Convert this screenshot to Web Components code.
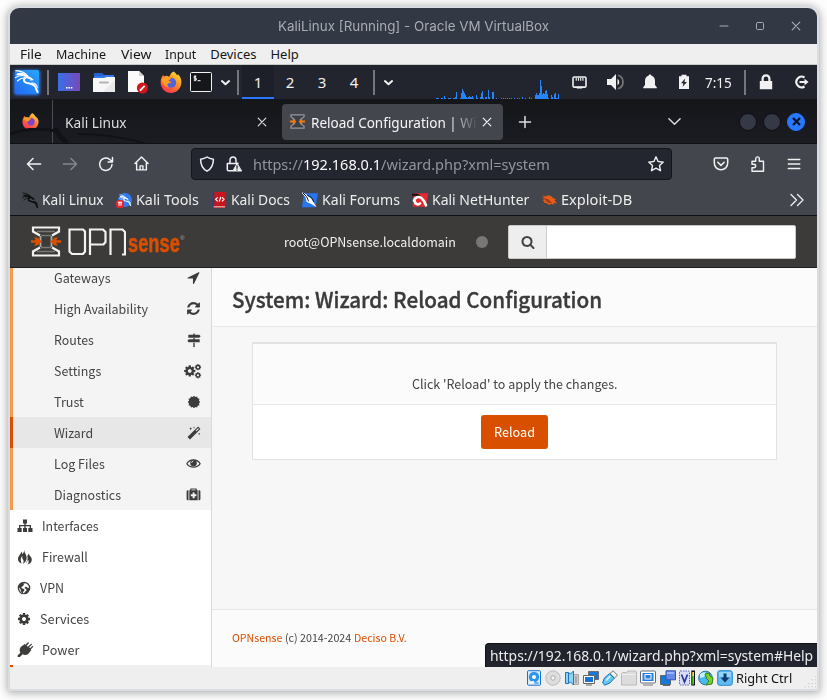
<!DOCTYPE html>
<html lang="en">
<head>
<meta charset="utf-8">
<title>KaliLinux [Running] - Oracle VM VirtualBox</title>
<style>
html,body{margin:0;width:827px;height:700px;overflow:hidden;background:#fdfdfd}
body{font-family:"Noto Sans","Open Sans",sans-serif}
</style>
</head>
<body>
<vm-window></vm-window>
<script>
const S = (vb, body, extra = '') => `<svg viewBox="${vb}" width="100%" height="100%" ${extra}>${body}</svg>`;
const L = (body, w = 1.5) => S('0 0 16 16', body, `fill="none" stroke="currentColor" stroke-width="${w}" stroke-linecap="round" stroke-linejoin="round"`);
const F = body => S('0 0 16 16', body, 'fill="currentColor"');
const FA = d => S('0 0 1792 1792', `<path d="${d}"/>`, 'fill="currentColor"');
const dragon = (c, w) => `<g fill="none" stroke="${c}" stroke-linecap="round" stroke-linejoin="round"><path stroke-width="${w}" d="M3 5.400C7 4 10.500 5.500 13.500 8.500L16.500 9.600M12.500 8C9 8.800 8.600 12.400 11.600 13.600C15.500 15 19.500 14.200 21 18C21.700 20 22.300 21.500 23.200 23"/><path stroke-width="${w * .55}" d="M1.500 1.600C6 1.800 10.500 3.500 13.500 7M1 8.600C4 6.600 8 6 11.500 7M3 12C5.500 9.600 8.500 8.600 11 8.800M13.500 7.600L18.500 10.800L16 11M17.500 14C20.500 13.800 22.600 15.600 22.800 18.600"/></g>`;
const cog = 'M1152 896q0-106-75-181t-181-75-181 75-75 181 75 181 181 75 181-75 75-181zm512-109v222q0 12-8 23t-20 13l-185 28q-19 54-39 91 35 50 107 138 10 12 10 25t-9 23q-27 37-99 108t-94 71q-12 0-26-9l-138-108q-44 23-91 38-16 136-29 186-7 28-36 28h-222q-14 0-24.5-8.5t-11.5-21.5l-28-184q-49-16-90-37l-141 107q-10 9-25 9-14 0-25-11-126-114-165-168-7-10-7-23 0-12 8-23 15-21 51-66.5t54-70.5q-27-50-41-99l-183-27q-13-2-21-12.5t-8-23.5v-222q0-12 8-23t19-13l186-28q14-46 39-92-40-57-107-138-10-12-10-24 0-10 9-23 26-36 98.5-107.5t94.5-71.5q13 0 26 10l138 107q44-23 91-38 16-136 29-186 7-28 36-28h222q14 0 24.5 8.5t11.5 21.5l28 184q49 16 90 37l142-107q9-9 24-9 13 0 25 10 129 119 165 170 7 8 7 22 0 12-8 23-15 21-51 66.5t-54 70.5q26 50 41 98l183 28q13 2 21 12.5t8 23.5z';
const star = (n, r1, r2) => Array.from({length: n * 2}, (_, i) => { const a = i * Math.PI / n - Math.PI / 2, r = i % 2 ? r2 : r1; return (8 + r * Math.cos(a)).toFixed(2) + ',' + (8 + r * Math.sin(a)).toFixed(2); }).join(' ');

const ICONS = {
  min: L('<path d="M4 8h8"/>', 1), max: L('<rect x="4.5" y="4.5" width="7" height="7" rx="1"/>', 1), close: L('<path d="M4.200 4.200l7.600 7.600M11.800 4.200l-7.600 7.600"/>', 1.2),
  plus: L('<path d="M8 2.500v11M2.500 8h11"/>', 1.5),
  chev: L('<path d="M2 5L8 11l6-6"/>', 1.5), chevS: L('<path d="M5 6.800L8 9.500l3-2.700"/>', 1.7),
  kali: S('0 0 32 32', `<defs><linearGradient id="g" x1="0" y1="1" x2="1" y2="0"><stop stop-color="#2468f2"/><stop offset="1" stop-color="#27a6fb"/></linearGradient><filter id="b" x="-30%" y="-30%" width="160%" height="160%"><feGaussianBlur stdDeviation="1.600"/></filter></defs><rect x="3" y="4" width="26" height="25" rx="3" fill="#2d7bff" filter="url(#b)"/><rect x="4" y="4" width="24" height="24" rx="1.500" fill="url(#g)"/><g transform="translate(3.400 3)">${dragon('#fff', 2)}</g>`),
  desk: S('0 0 22 18', '<defs><linearGradient id="g"><stop stop-color="#3a70e8"/><stop offset="1" stop-color="#7849b8"/></linearGradient></defs><path fill="url(#g)" d="M0 0h22v18H0z"/><path fill="#fff" d="M8 14h1.600v1.500H8zM10.400 14H12v1.500h-1.600zM12.800 14h1.600v1.500h-1.600z"/>'),
  folder: S('0 0 22 21', '<path d="M1 1h8l2 2h10v8H1z" fill="#3478ea"/><path d="M1 1h8l2 3H1z" fill="#2562cf"/><path d="M0 6h11l3-1h8v15H0z" fill="#f7f7f7"/><path d="M22 8v12H10z" fill="#e8e8e8"/><rect x="6" y="9.400" width="10" height="2.200" rx="1" fill="#b4b4b4"/>'),
  doc: S('0 0 22 23', '<path d="M1 0h11l5 5v16H1z" fill="#fafafa"/><path d="M12 0l5 5h-5z" fill="#d0d0d0"/><circle cx="15.500" cy="17" r="5.600" fill="#d3151c"/><path d="M13 19.600l4.600-4.800" stroke="#fff" stroke-width="1.800"/>'),
  fox: S('0 0 22 22', '<defs><linearGradient id="g" x1=".8" y1="0" x2=".2" y2="1"><stop stop-color="#ffdf3c"/><stop offset=".4" stop-color="#ff9420"/><stop offset="1" stop-color="#fb2a57"/></linearGradient></defs><path fill="url(#g)" d="M13.600.4c2 1.200 2.600 2.600 3.800 4.200.4-.5.5-1 .4-1.500 2.300 2 3.600 5 3.600 8.200C21.400 17.300 16.700 22 11 22S.6 17.300.6 11.500C.6 8.200 1.800 5.500 3.300 3.800c0 .8.2 1.300.6 1.800 2-1 3.600-1 5 .2 1.200-.6 1-3.600 4.700-5.400z"/><circle cx="11.200" cy="11.800" r="5" fill="#5064dc"/><path fill="#ff9a22" d="M1.500 9c1.500-3.500 5-4 7-2.600 1 .1 2.200.2 2.600.7-.6 1.500-2 1.600-2.400 2.800 1 .7 2 .5 3 1.200-1.300 1.500-2.700.6-4 1.800-1.200 1.400.4 2.800 1 3.300-3.200.3-6.200-3.200-7.200-7.200z"/>'),
  fox2: S('0 0 22 22', '<defs><linearGradient id="g" x1=".8" y1="0" x2=".2" y2="1"><stop stop-color="#ffe23c"/><stop offset=".45" stop-color="#ff7a2d"/><stop offset="1" stop-color="#f42a61"/></linearGradient></defs><path fill="url(#g)" d="M13.600.4c2 1.200 2.600 2.600 3.800 4.200 2.600 1.500 4 3.800 4 6.700C21.400 17.300 16.700 22 11 22S.6 17.300.6 11.500C.6 8.200 1.800 5.500 3.300 3.800l2 2 3.600 0c1.200-.6 1-3.600 4.700-5.400z"/><circle cx="11.600" cy="11.400" r="4.800" fill="#8142c8"/><path fill="#ff9a22" d="M2 8c2-2.500 5-3 7-1.600 1 .1 2.200.2 2.600.7-.6 1.500-2 1.600-2.400 2.800l-2 1z"/>'),
  term: S('0 0 22 20', '<rect x=".5" y=".5" width="21" height="19" rx="1" fill="#16171a" stroke="#f2f2f2"/><path d="M6.300 4.300H4.200v1.900h2v1.900H3.800M5.100 3.300v6" fill="none" stroke="#fff"/><path d="M7.500 8.700h3" stroke="#fff"/>'),
  net: S('0 0 16 14', '<rect x="1" y="1" width="14" height="11" rx="1.500" fill="none" stroke="currentColor" stroke-width="1.700"/><path d="M4.500 2v3M6.900 2v3M9.300 2v3M11.700 2v3" stroke="currentColor" stroke-width="1.200"/><path d="M5 12.500h6" stroke="currentColor" stroke-width="2"/>'),
  vol: S('0 0 18 16', '<path d="M0 5h4l5-5v16l-5-5H0z" fill="currentColor"/><path d="M10.500 4.700a4 4 0 0 1 0 6.600z" fill="currentColor"/><path d="M11 1.300a7 7 0 0 1 0 13.400" fill="none" stroke="#777" stroke-width="1.700"/>'),
  bell: F('<path d="M8 .5c1 0 1.400.6 1.500 1.300C12 2.500 13 4.500 13 7v4l1.800 2.300v.9H1.200v-.9L3 11V7c0-2.500 1-4.500 3.500-5.200C6.600 1.100 7 .5 8 .5z"/>'),
  batt: F('<path fill-rule="evenodd" d="M5.500.8h5v1.400H13V15H3V2.200h2.500zM9.200 4.500L5 9.200h2.400l-.8 3.600L11 8H8.500z"/>'),
  lock: F('<path fill-rule="evenodd" d="M3.500 7V4.800C3.500 2 5.300.3 8 .3s4.500 1.700 4.500 4.500V7h1.700v8.300H1.800V7zM5.700 7h4.600V5c0-1.600-.8-2.500-2.300-2.500S5.700 3.400 5.700 5z"/>'),
  out: S('0 0 16 16', '<path d="M11.500 3.500A5.300 5.300 0 1 0 11.500 12.500" fill="none" stroke="currentColor" stroke-width="2.100"/><path d="M6.500 7h5V4.700L15.600 8l-4.100 3.300V9h-5z" fill="currentColor"/>'),
  back: L('<path d="M14.600 8H1.600M7 2.500L1.500 8L7 13.500"/>', 1.5), fwd: L('<path d="M1.400 8h13M9 2.500L14.500 8L9 13.500"/>', 1.5),
  reload: L('<path d="M14 8.500A6.200 6.200 0 1 1 11.500 3.300L14.300 5.800M14.500 1.600V6h-4.400"/>', 1.5),
  home: L('<path d="M1 8L8 1l7 7M2.800 7v7.800h10.400V7M6.500 14.500V10.500h3v4"/>', 1.5),
  shield: L('<path d="M8 1c2 1.500 4.300 2 6.400 2.200 0 5.800-2 9.600-6.400 12C3.600 12.800 1.600 9 1.600 3.200 3.700 3 6 2.500 8 1z"/>', 1.5),
  lockw: L('<path d="M4 7V4.300C4 2 5.300.9 7 .9s3 1.100 3 3.400V6M6.500 14.800H2.500c-.8 0-1.200-.5-1.200-1.300V7.500h9M10.500 7.300h1.500"/><path d="M11 7.700L6.800 15h8.500z" fill="#f2f2f2" stroke="#f2f2f2" stroke-width="1"/><path d="M11 10v2.300M11 14v.1" stroke="#23252f" stroke-width="1.300"/>', 1.5),
  star: L('<path d="M8 .8l2.100 4.700 5.200.6-3.800 3.500 1 5.100L8 12.200l-4.500 2.500 1-5.100L.7 6.100l5.200-.6z"/>', 1.4),
  pocket: L('<path d="M2.500 2h11c.8 0 1.200.4 1.200 1.200V7c0 4-3 6.800-6.700 6.800S1.300 11 1.300 7V3.200C1.300 2.400 1.700 2 2.500 2zM4.800 6.300L8 9.400l3.200-3.100"/>', 1.5),
  puzzle: L('<path d="M2 5.300h3.700V3c0-2.800 3.600-2.800 3.600 0v2.300h4.200v9.900H2v-3.500h1.700c2.600 0 2.600-3.400 0-3.400H2z"/>', 1.4),
  burger: L('<path d="M2.300 3.500h11.500M2.300 8h11.500M2.300 12.500h11.500"/>', 1.4),
  more: L('<path d="M2 2.500L7.500 8L2 13.500M8.500 2.500L14 8l-5.500 5.500"/>', 1.4),
  bk1: S('0 0 24 24', dragon('#0c0c0e', 2.3)),
  bk2: S('0 0 24 24', `<circle cx="13.500" cy="12" r="10.500" fill="#2f7df0"/><g transform="translate(4.500 3) scale(.75)">${dragon('#fff', 2.2)}</g><rect y="12" width="12" height="12" rx="5" fill="#e5262e"/><path d="M2.800 15.500h6.400M4.600 15.500v5M7.500 15.500v5" stroke="#fff" stroke-width="1.600"/>`),
  bk3: S('0 0 24 24', '<path fill="#c9151b" d="M4 0h18v24H4z"/><path fill="#32407a" d="M2 0h3v22H2z"/><path fill="#ddd" d="M4 21.500h17v1.500H4z"/><path d="M10 8l-3 3 3 3M14.500 7.500L12.500 14.500M16.500 8l3 3-3 3" fill="none" stroke="#fff" stroke-width="1.800"/>'),
  bk4: S('0 0 24 24', '<path fill="#2776ef" d="M3 2h21l-4 21H0z"/><path fill="#fff" d="M0 0l7 4 7 6 3 5 5 8-8-5-7-3-2-8-5-5z"/><path stroke="#171a22" stroke-width="1.500" fill="none" d="M1 1l6 6 3 7M8 5l6 3 4 7"/>'),
  bk5: S('0 0 24 24', '<path fill="#e9272f" d="M3 2h21l-3 20H1z"/><path fill="none" stroke="#111" stroke-width="3" d="M0 4h8l4 3"/><path fill="none" stroke="#fff" stroke-width="4" stroke-linecap="round" d="M3 13c1-5 7-7 11-4 4 3 5 6 7 11M4 13c0 5 5 7 8 4"/>'),
  bk6: S('0 0 24 24', '<path fill="#e85a18" d="M2 4l5 3 3-2 5 1 3 3 5 2-3 1 4 5-5-1 1 3-4-1-4 1-5-3-3 0 1-2-3-2 3-1-3-3 3 0z"/><path fill="#a53a12" d="M3 9l8 2 6 6-6-1z"/>'),
  opn: S('0 0 30 31', '<g fill="none"><path d="M9.500 10v11M20.500 10v11" stroke="#a9a9a7" stroke-width="1.800"/><path d="M6 5.500h18M6 25.500h18M10 9.500h10M10 21.500h10" stroke="#777775" stroke-width="1.600"/><path d="M9 9.500L2 5.500V1.500h26V5.500L21 9.500M9 21.500L2 25.500v4h26v-4L21 21.500" stroke="#f1f1f0" stroke-width="2.200"/></g><path fill="#d94f00" d="M0 14.300h5l-2-2.800h3.200L11 15.500 6.200 19.500H3l2-2.800H0zM30 14.300h-5l2-2.800h-3.200L19 15.500l4.800 4H27l-2-2.800h5z"/>'),
  fav: S('0 0 18 18', '<path d="M2 2h14v2l-4 3v4l4 3v2H2v-2l4-3V7L2 4z" fill="#3c3f45" stroke="#96989c" stroke-width="1.200"/><path fill="#f07814" d="M1 8h3V6l4 3-4 3v-2H1zM17 8h-3V6l-4 3 4 3v-2h3z"/>'),
  arrow: FA('M1593 349l-640 1280q-17 35-57 35-5 0-15-2-22-5-35.500-22.500t-13.500-39.500v-576h-576q-22 0-39.500-13.500t-22.500-35.500 4-42 29-30l1280-640q13-7 29-7 27 0 45 19 15 14 18.500 34.500t-6.500 39.500z'),
  refresh: FA('M1639 1056q0 5-1 7-64 268-268 434.500t-478 166.500q-146 0-282.500-55t-243.500-157l-129 129q-19 19-45 19t-45-19-19-45v-448q0-26 19-45t45-19h448q26 0 45 19t19 45-19 45l-137 137q71 66 161 102t187 36q134 0 250-65t186-179q11-17 53-117 8-23 30-23h192q13 0 22.500 9.500t9.500 22.500zm25-800v448q0 26-19 45t-45 19h-448q-26 0-45-19t-19-45 19-45l138-138q-148-137-349-137-134 0-250 65t-186 179q-11 17-53 117-8 23-30 23h-199q-13 0-22.500-9.500t-9.500-22.500v-7q65-268 270-434.500t480-166.500q146 0 284 55.500t245 156.500l130-129q19-19 45-19t45 19 19 45z'),
  cog: FA(cog),
  cogs: S('0 0 1792 1792', `<path transform="translate(-200 160) scale(.82)" d="${cog}"/><path fill-rule="evenodd" transform="translate(1040 60) scale(.46)" d="${cog}"/><path transform="translate(1040 960) scale(.46)" d="${cog}"/>`, 'fill="currentColor"'),
  search: FA('M1216 832q0-185-131.500-316.500t-316.500-131.500-316.500 131.500-131.500 316.500 131.500 316.500 316.500 131.500 316.500-131.500 131.500-316.500zm512 832q0 52-38 90t-90 38q-54 0-90-38l-343-342q-179 124-399 124-143 0-273.500-55.500t-225-150-150-225-55.500-273.500 55.500-273.500 150-225 225-150 273.500-55.500 273.500 55.500 225 150 150 225 55.500 273.500q0 220-124 399l343 343q37 37 37 90z'),
  signs: F('<path d="M7.200.500h1.600V2H14l1.600 1.700L14 5.400H1.500V2h5.700zM7.200 5.800h1.600v1.400h5.700v3.500H2L.4 9 2 7.200h5.200zM7.200 11h1.600v5H7.200z"/>'),
  cert: F(`<polygon points="${star(12, 7.200, 5.900)}"/>`),
  magic: F('<path fill-rule="evenodd" d="M12.700.600l2.700 2.700L3.400 15.500.6 12.700zM12.700 2.400L9.900 5.200l.9.900 2.800-2.800z"/><path d="M2.500 3l1.300-.5L4.300 1l.5 1.500L6 3l-1.200.5L4.300 5l-.5-1.500zM7 1.800l.7-.3L8 .6l.3.9.9.3-.9.300-.3.900-.3-.900zM12.500 9l1-.4.4-1 .4 1 1 .4-1 .4-.4 1-.4-1z"/>'),
  eye: S('0 0 18 16', '<path d="M1 8.200C4.500 2 13.500 2 17 8.200 13.500 13.800 4.500 13.800 1 8.200z" fill="none" stroke="currentColor" stroke-width="1.400"/><circle cx="9" cy="7.400" r="4" fill="currentColor"/><path d="M6.800 7.200a2.200 2.200 0 0 1 2-2.200" stroke="#f4f4f4" fill="none"/>'),
  medkit: S('0 0 18 16', '<path fill="currentColor" fill-rule="evenodd" d="M5 3V1.500Q5 .7 5.800.7h6.400q.8 0 .8.8V3h1v12H4V3zM6.500 3h5v-.9h-5zM8 5.500v2.200H5.800v2.500H8v2.200h2.300v-2.200h2.200V7.700h-2.200V5.500zM3 3v12h-.8Q.700 15 .7 13.500v-9Q.7 3 2.200 3zM15 3v12h.8q1.500 0 1.500-1.500v-9q0-1.500-1.500-1.500z"/>'),
  sitemap: F('<path d="M6 1.500h4v4H8.700V7H14v3h1.500v4h-4.200v-4h1.400V8.300h-4V10H10v4H6v-4h1.300V8.300h-4V10h1.400v4H.5v-4H2V7h5.300V5.500H6z"/>'),
  fire: F('<path d="M7.200.8C7 3.600 9.600 5.600 9.700 8.600c.1 2.800-1.500 5-4 6.700 1-1.800 1.300-3.300.3-4.700-.8-1.200-1-2.200-.6-3.600-1.900 1.500-2.200 3.600-.8 7.600C2 13.600.8 11.800 1 9.500 1.300 6.500 4 5.500 4.300 2.600c.7.700 1 1.600 1 2.600C6.500 4 7.200 2.600 7.200.8zM11.500 3.500c-.2 2.700 3.300 4 3.300 7 0 2.500-1.500 4.200-4.300 5 1.500-1.600 1.600-3.200.3-5-.3 1.800-1 2.800-2 3.600 1.500-2.600 2.400-4.600 1.500-7.300 1.100-.8 1.400-1.900 1.200-3.300z"/>'),
  globe: F('<path fill-rule="evenodd" d="M8 .8a7.200 7.200 0 1 1 0 14.400A7.200 7.200 0 0 1 8 .8zM9.500 2.500L7 3l1.200 1.400L6.300 6 4.800 7.300 6 8.500l1.800.5.8 1.200L7 12.500l-.2 1.500L4.500 12 4 9.500 2.300 7.300 2.500 9c.4 2.600 2.500 4.700 5.500 4.900l1-1.200 2-2.200-.6-1.500-1.800-.8.7-1.500 1.900.2 1.300 1.500L13.800 7c-.4-2-2-4-4.300-4.500z"/>'),
  plug: F('<path d="M14.600 1.400q.7.900 0 1.500l-2.500 2.400 1 1 2.200-2.200q.8-.2 1 .6L13.700 7.400l.7.7-1.200 1.200c-1.400 3.400-4.700 4.600-7.600 3L3 15H.7v-1.700L3.400 10.700C1.800 8 3 4.600 6.300 3.200L7.500 2l.9.8L11 .3q1 0 .9.900L9.700 3.700l1 1z"/>'),
  s1: F('<rect x="1.500" y=".7" width="13" height="14.500" rx="1" fill="#d9ecfb" stroke="#1774cf"/><circle cx="8" cy="7" r="5.200" fill="#2d95eb"/><circle cx="8" cy="7" r="2" fill="#fff"/><path d="M4 13l4-1.500" stroke="#fff" stroke-width="1.500"/><path d="M8.500 13h4" stroke="#1774cf"/>'),
  s2: F('<circle cx="8" cy="8" r="7.200" fill="#ddd" stroke="#bbb"/><circle cx="8" cy="8" r="2.200" fill="#f5f5f5" stroke="#aaa"/>'),
  s3: F('<path d="M9 4.500h5.500v10H9z" fill="#ccc" stroke="#aaa"/><path d="M1.500 2.500h3L6.500 4l3-3v14l-3-3-2 1.500h-3z" fill="#8fd4f4" stroke="#1b76bd"/><path d="M4.500 3v10" stroke="#1b76bd"/><path d="M12 6v7" stroke="#888"/>'),
  s4: F('<path d="M5.500 1.500h10v8h-10z" fill="#1b76d6" stroke="#6d6d6d"/><path d="M.5 5.500h11v8H.500z" fill="#fff" stroke="#666"/><path d="M2 7h8v5H2z" fill="#1873d3"/><path d="M3 15h6" stroke="#666"/>'),
  s5: F('<path d="M11 .8l4.500 4.400L12.500 8 8 3.600z" fill="#f2f2f2" stroke="#777"/><path d="M7.500 3.600l4.800 4.600-4.500 4.800-5 2.200-2.200-2.200 1.800-5z" fill="#65c4f1" stroke="#1670b8"/><path d="M4 10.500l4.300-4.500" stroke="#d2f4ff" stroke-width="1.800"/>'),
  s6: F('<path d="M.5 15V3.500l1-1h4l1.500-1.500h7.500l1 1V15z" fill="#dcdcdc" stroke="#bbb"/><path d="M1 4.500h14" stroke="#eee"/>'),
  s7: F('<rect x=".5" y="1" width="15" height="12" rx="1" fill="#fff" stroke="#646e7a"/><rect x="2.500" y="3" width="11" height="8" fill="#277edc"/><rect x="5" y="4.500" width="6" height="4.500" fill="none" stroke="#fff"/><path d="M3 15h10" stroke="#777"/>'),
  s8: F('<path d="M.5 5.500h10v9H.5z" fill="#1479dc" stroke="#566"/><path d="M6 .8h9.500v9H6z" fill="#6588ef" stroke="#3557a9"/><path d="M7 2h7v2H7z" fill="#9bb6ff"/><path d="M3 15.500h7" stroke="#666"/>'),
  s9: F('<rect x=".5" y="1" width="10" height="14" rx="1" fill="#d9dcfb" stroke="#5660b8" stroke-dasharray="1.500 1"/><path d="M2.500 4.500L5.500 12 8.500 4.500" fill="none" stroke="#2435a0" stroke-width="1.700"/><path d="M12.300.5H16v15h-3.700z" fill="#111"/><path d="M13.300 5h1.700v9.500h-1.700z" fill="#39dd24"/><path d="M13.300 2h1.700v4h-1.700z" fill="#ffe62b"/>'),
  s10: F('<circle cx="7.500" cy="8" r="6.800" fill="#4bb9ef" stroke="#27729d"/><path d="M2 4q4-3 6-1L6 7 2 8zM5 14l2-4" fill="#c5f0fb"/><path d="M7 4l4-1 1 3 3 2-1 6-6 1 3-4-2-2z" fill="#7bd02c" stroke="#398016"/>'),
  s11: F('<rect x=".7" y=".7" width="14.600" height="14.600" rx="2" fill="#62baf1" stroke="#2387c9"/><path d="M2 2h12v5H2z" fill="#94d5fa"/><path d="M6.500 3.500h3v4h3L8 12.500l-4.500-5h3z" fill="#123a70"/>'),
  grip: F('<path d="M14 1h1v1h-1zM10 5h1v1h-1zM14 5h1v1h-1zM6 9h1v1H6zM10 9h1v1h-1zM14 9h1v1h-1zM2 13h1v1H2zM6 13h1v1H6zM10 13h1v1h-1zM14 13h1v1h-1z" fill="#aaa"/>')
};

const define = (name, css, html) => customElements.define(name, class extends HTMLElement {
  constructor() {
    super();
    this.attachShadow({mode: 'open'}).innerHTML = `<style>*{box-sizing:border-box}:host{display:block}${css}</style>${html}`;
  }
});

/* Label drawn at a fixed advance width. */
const labels = [];
customElements.define('fit-text', class extends HTMLElement {
  constructor() {
    super();
    this.attachShadow({mode: 'open'}).innerHTML = '<style>:host{display:inline-block;flex:none;white-space:nowrap;text-align:left}span{display:inline-block;transform-origin:0 50%}</style><span><slot></slot></span>';
    labels.push(this);
  }
  fit() {
    const w = +this.getAttribute('w'), span = this.shadowRoot.querySelector('span');
    this.style.width = w + 'px';
    span.style.transform = `scaleX(${w / span.offsetWidth})`;
  }
});

customElements.define('ui-icon', class extends HTMLElement {
  constructor() {
    super();
    const w = this.getAttribute('w') || 16, h = this.getAttribute('h') || w;
    this.attachShadow({mode: 'open'}).innerHTML = `<style>:host{display:block;flex:none;width:${w}px;height:${h}px}svg{display:block;overflow:visible}</style>${ICONS[this.getAttribute('name')]}`;
  }
});

define('title-bar', `:host{display:grid;grid-template-columns:268px 1fr 36px 36px 36px;align-items:center;justify-items:center;height:36px;background:#323844;color:#a8abb2;border-radius:9px 9px 0 0;padding-right:3px;font:13px/36px Inter,sans-serif}fit-text{justify-self:start}`,
  `<i></i><fit-text w="271">KaliLinux [Running] - Oracle VM VirtualBox</fit-text><ui-icon name="min"></ui-icon><ui-icon name="max"></ui-icon><ui-icon name="close"></ui-icon>`);

define('menu-bar', `:host{display:flex;gap:14.300px;height:21px;background:#efefef;border-bottom:1px solid #c9c9c9;color:#161616;padding-left:10px;font:13px/20px "Noto Sans",sans-serif}`,
  `<fit-text w="22">File</fit-text><fit-text w="50">Machine</fit-text><fit-text w="30">View</fit-text><fit-text w="31">Input</fit-text><fit-text w="46">Devices</fit-text><fit-text w="28">Help</fit-text>`);

const bars = [[0,1],[1,1],[2,1],[5,1],[6,1],[8,3],[9,1],[12,1],[13,1],[14,1],[17,1],[18,1],[19,2],[20,7],[24,1],[25,6],[26,10],[27,8],[28,6],[29,4],[30,2],[31,1],[32,2],[33,3],[34,2],[35,2],[36,3],[37,1],[40,4],[41,1],[44,2],[45,6],[46,8],[47,1],[49,2],[50,2],[52,9],[53,2],[56,7],[57,7],[60,1],[65,1],[67,1],[69,1],[71,1],[73,1],[75,1],[78,1],[81,1],[83,1],[86,2],[89,1],[93,2],[95,1],[99,4],[100,6],[101,4],[102,4],[103,6],[104,19],[105,13],[106,5],[107,6],[108,5],[109,8],[110,9],[111,5],[112,1],[115,4],[116,2],[118,5],[119,6],[120,1],[121,1],[122,5]];
define('desktop-panel', `:host{display:grid;grid-template-columns:34px 7px 36px 33px 35px 31px 30px 18px 8px 32px 32px 32px 32px 8px 20px 38px 124px 39px 33px 36px 32px 36px 18px 24px 1fr;align-items:center;justify-items:center;height:35px;background:#23252e;border-bottom:1px solid #15161b;color:#f1f1f1;font:15px/34px "Noto Sans",sans-serif}
  .sep{width:2px;height:25px;background:#75777c}.ws{width:32px;height:34px;text-align:center}.on{background:#1d2028;border-bottom:2px solid #2777ff;line-height:34px}.graph{align-self:end;display:block}.time{color:#f1f1f1}`,
  `<ui-icon name="kali" w="32"></ui-icon><i class="sep"></i><ui-icon name="desk" w="22" h="18"></ui-icon><ui-icon name="folder" w="22" h="21"></ui-icon><ui-icon name="doc" w="22" h="23"></ui-icon><ui-icon name="fox" w="22"></ui-icon><ui-icon name="term" w="22" h="20"></ui-icon><ui-icon name="chevS" w="19"></ui-icon><i class="sep"></i>
  <span class="ws on">1</span><span class="ws">2</span><span class="ws">3</span><span class="ws">4</span><i class="sep"></i><ui-icon name="chevS" w="19"></ui-icon><i></i>
  <svg class="graph" width="124" height="22" shape-rendering="crispEdges" fill="#2584fa">${bars.map(([x, h]) => `<rect x="${x}" y="${22 - h}" width="1" height="${h}"/>`).join('')}</svg>
  <ui-icon name="net" w="15" h="13"></ui-icon><ui-icon name="vol" w="18"></ui-icon><ui-icon name="bell"></ui-icon><ui-icon name="batt"></ui-icon><fit-text w="27" class="time">7:15</fit-text><i class="sep"></i><ui-icon name="lock"></ui-icon><ui-icon name="out" style="margin-left:6px"></ui-icon>`);

define('tab-strip', `:host{display:flex;align-items:center;height:44px;background:linear-gradient(#15161a,#1b1c22);border-bottom:1px solid #0f1014;color:#dedee0;font:15px/36px "Noto Sans",sans-serif;position:relative}
  .pin{width:43px;height:43px;border-right:1px solid #4b4c51;display:grid;place-items:center;flex:none}.pin ui-icon{margin-right:2px}
  .tab{display:flex;align-items:center}.a{width:229px;padding-left:12px;justify-content:space-between;padding-right:12px}
  .b{width:221px;height:36px;border-radius:4px;background:#43464d;color:#f6f6f7;padding:0 8px 0 7px;gap:5px}.clip{width:165px;flex:none;margin-right:-1px;-webkit-mask:linear-gradient(90deg,#000 138px,transparent 167px);mask:linear-gradient(90deg,#000 138px,transparent 167px)}.b .x{margin-left:-1px}
  .btns{display:flex;gap:6px;margin-left:57px}.c{width:18px;height:18px;border-radius:50%;background:#353945;border:1px solid #0d0e12}.k{background:#2777ff;border-color:#2777ff;display:grid;place-items:center;color:#0c1220}
  .mark{position:absolute;left:0;bottom:0}`,
  `<svg class="mark" width="140" height="15" fill="none" stroke="#111216"><path d="M0 6Q22-2 46 3" stroke-width="3"/><path d="M45 0q3 7 12 15" stroke-width="5"/><path d="M68 6q34 0 66 9" stroke-width="2"/></svg>
  <div class="pin"><ui-icon name="fox2" w="17"></ui-icon></div><div class="tab a"><fit-text w="62">Kali Linux</fit-text><ui-icon name="close"></ui-icon></div>
  <div class="tab b"><ui-icon name="fav" w="17"></ui-icon><div class="clip"><fit-text w="165">Reload Configuration | Wi</fit-text></div><ui-icon class="x" name="close"></ui-icon></div>
  <ui-icon name="plus" style="margin-left:14px"></ui-icon><ui-icon name="chev" w="15" style="margin-left:134px"></ui-icon>
  <div class="btns"><i class="c"></i><i class="c"></i><i class="c k"><svg width="9" height="9" stroke="#0c1220" stroke-width="2.200"><path d="M1 1l7 7M8 1l-7 7"/></svg></i></div>`);

define('nav-bar', `:host{display:flex;align-items:center;height:40px;color:#f1f1f2;padding-left:16px;font:15px/30px "Noto Sans",sans-serif}
  .n{display:flex;gap:20px}.url{display:flex;align-items:center;width:481px;height:32px;margin-left:42px;border:1px solid #14151b;border-radius:4px;background:#23252f;color:#94959b;padding:0 7px}
  b{font-weight:400;color:#fbfbfb}.e{display:flex;gap:20px;margin-left:41px}`,
  `<div class="n"><ui-icon name="back"></ui-icon><ui-icon name="fwd" style="color:#85878d"></ui-icon><ui-icon name="reload"></ui-icon><ui-icon name="home" w="15"></ui-icon></div>
  <div class="url"><ui-icon name="shield" style="color:#f1f1f2"></ui-icon><ui-icon name="lockw" style="color:#f1f1f2;margin-left:11px"></ui-icon><fit-text w="297" style="margin-left:11px">https://<b>192.168.0.1</b>/wizard.php?xml=system</fit-text><ui-icon name="star" style="color:#f1f1f2;margin-left:auto"></ui-icon></div>
  <div class="e"><ui-icon name="pocket"></ui-icon><ui-icon name="puzzle" style="margin-left:1px"></ui-icon><ui-icon name="burger"></ui-icon></div>`);

define('book-marks', `:host{display:flex;align-items:center;height:31px;color:#ededee;padding-left:12px;font:15px/31px "Noto Sans",sans-serif}span{display:flex;align-items:center;gap:4px;margin-right:12px}`,
  [['bk1', 62, 'Kali Linux'], ['bk2', 63, 'Kali Tools'], ['bk3', 59, 'Kali Docs'], ['bk4', 78, 'Kali Forums'], ['bk5', 97, 'Kali NetHunter'], ['bk6', 71, 'Exploit-DB']].map(([i, w, t]) => `<span><ui-icon name="${i}"></ui-icon><fit-text w="${w}">${t}</fit-text></span>`).join('') + '<ui-icon name="more" style="margin-left:auto;margin-right:12px"></ui-icon>');

define('browser-bars', `:host{background:#43464d;height:72px;border-bottom:1px solid #101116}`, `<nav-bar></nav-bar><book-marks></book-marks>`);

define('brand-logo', `:host{display:flex;align-items:center;width:153px;height:32px}.w{flex:none;margin:0 2px 0 7px}.s{font:bold 26px/30px "Liberation Sans Narrow","Liberation Sans",sans-serif;color:#d94f00;padding-top:3px;-webkit-text-stroke:.6px #d94f00}sup{font:6px/6px "Liberation Sans",sans-serif;color:#aaa;align-self:flex-start;margin-top:9px}`,
  `<ui-icon name="opn" w="30" h="31" style="margin-left:1px"></ui-icon><svg class="w" width="58" height="28" fill="none" stroke="#f2f2f1" stroke-width="2.200"><path d="M1.500 1.500h13.500l2 2v20l-2 2.500h-11l-2.500-2.500zM22 27V1.500h13l2.500 2.500v10l-2 2.500H22M42.500 27V1.500h12l2.500 2.500v22.500h-3"/></svg><fit-text class="s" w="52">sense</fit-text><sup>®</sup>`);

define('page-header', `:host{display:flex;align-items:center;height:52px;background:#3c3b39;border-bottom:1px solid #201f1f;padding-left:20px;color:#f0f0f0;font:13px/30px "Noto Sans CJK SC",sans-serif}
  .u{margin-left:101px}.d{width:12px;height:12px;border-radius:50%;background:#777;margin-left:20px}.q{display:flex;width:288px;height:34px;margin-left:20px;background:#fff;border:1px solid #c8c8c8;border-radius:2px}.q i{display:grid;place-items:center;width:38px;background:#eee;border-right:1px solid #ccc;color:#444}`,
  `<brand-logo></brand-logo><fit-text class="u" w="172">root@OPNsense.localdomain</fit-text><i class="d"></i><div class="q"><i><ui-icon name="search" w="14"></ui-icon></i></div>`);

define('side-item', `:host{display:flex;align-items:center;height:31px;background:#f4f4f4;border-left:3px solid #f29c50;padding:0 10px 0 41px;justify-content:space-between}:host([on]){background:#e7e7e7;border-color:#d94f00}:host([top]){background:#fff;border:0;padding-left:7px;justify-content:flex-start;gap:9px}`, '<slot></slot>');

define('side-nav', `:host{width:202px;height:399px;background:#fff;border-right:1px solid #d9d9da;overflow:hidden;color:#444;font:13px/31px "Noto Sans CJK SC",sans-serif}.m{margin-top:-6px}ui-icon{color:#3c3c3b}.next{height:3px;background:#f0f0f0;border-left:3px solid #d94f00}`,
  '<div class="m">' + [['Gateways', 57, 'arrow', 15], ['High Availability', 94, 'refresh', 15], ['Routes', 40, 'signs', 14], ['Settings', 47, 'cogs', 16], ['Trust', 30, 'cert', 14], ['Wizard', 39, 'magic', 14], ['Log Files', 51, 'eye', 15], ['Diagnostics', 67, 'medkit', 15]].map(([t, w, i, s]) => `<side-item${t === 'Wizard' ? ' on' : ''}><fit-text w="${w}">${t}</fit-text><ui-icon name="${i}" w="${s}"></ui-icon></side-item>`).join('') +
  [['Interfaces', 57, 'sitemap', 16], ['Firewall', 46, 'fire', 16], ['VPN', 24, 'globe', 14], ['Services', 49, 'cog', 14], ['Power', 37, 'plug', 16]].map(([t, w, i, s]) => `<side-item top><ui-icon name="${i}" w="${s}"></ui-icon><fit-text w="${w}">${t}</fit-text></side-item>`).join('') + '<div class="next"></div></div>');

define('primary-button', `:host{width:67px;height:34px;background:#d94f00;border-radius:3px;color:#fff;text-align:center;line-height:34px}`, '<fit-text w="41"><slot></slot></fit-text>');

define('wizard-card', `:host{margin:15px 40px 0;height:118px;border:1px solid #e2e2e2;border-top:2px solid #e2e2e2;background:#fff}.t{height:61px;background:#fbfbfb;border-bottom:1px solid #e9e9e9;padding-top:24px;line-height:31px;text-align:center}.f{display:flex;justify-content:center;padding-top:10px}`,
  `<div class="t"><fit-text w="206">Click 'Reload' to apply the changes.</fit-text></div><div class="f"><primary-button>Reload</primary-button></div>`);

define('page-main', `:host{display:flex;flex-direction:column;flex:1;background:#f7f7f7;color:#444;font:13px/20px "Noto Sans CJK SC",sans-serif}
  header{height:59px;background:#fbfbfb;border-bottom:1px solid #e8e8e8;padding-left:20px;font-size:21.500px;font-weight:500;line-height:61px;color:#3b3b3b;-webkit-text-stroke:.35px #3b3b3b}footer{height:58px;margin-top:auto;background:#fbfbfb;border-top:1px solid #e5e5e5;padding-left:20px;font-size:11px;line-height:54px;display:flex;gap:3px}a{color:#d94f00}`,
  `<header><fit-text w="370">System: Wizard: Reload Configuration</fit-text></header><wizard-card></wizard-card><footer><fit-text w="50"><a>OPNsense</a></fit-text><fit-text w="66">(c) 2014-2024</fit-text><fit-text w="53"><a>Deciso B.V.</a></fit-text></footer>`);

define('link-status', `:host{position:absolute;right:0;bottom:0;width:332px;height:24px;background:#22242d;border:1px solid #101116;border-width:1px 0 0 1px;border-radius:4px 0 0 0;color:#ededed;padding-left:4px;font:15px/22px "Noto Sans",sans-serif}`, '<fit-text w="323">https://192.168.0.1/wizard.php?xml=system#Help</fit-text>');

define('page-body', `:host{display:flex;height:399px;position:relative}`, '<side-nav></side-nav><page-main></page-main><link-status></link-status>');

define('status-bar', `:host{display:flex;align-items:center;justify-content:flex-end;height:22px;background:#efefef;color:#111;font:13px/22px "Noto Sans",sans-serif}ui-icon{margin-left:3.150px}fit-text{margin-left:3px}.g{margin-left:11px}`,
  Array.from({length: 11}, (_, i) => `<ui-icon name="s${i + 1}"></ui-icon>`).join('') + '<fit-text w="56">Right Ctrl</fit-text><ui-icon class="g" name="grip" w="14" style="margin-top:8px"></ui-icon>');

define('vm-window', `:host{width:807px;margin:8px 0 0 10px;border-radius:9px 9px 0 0;box-shadow:0 0 0 2px #d9dde1,0 1px 9px 3px rgba(0,0,0,.32)}`,
  '<title-bar></title-bar><menu-bar></menu-bar><desktop-panel></desktop-panel><tab-strip></tab-strip><browser-bars></browser-bars><page-header></page-header><page-body></page-body><status-bar></status-bar>');

labels.forEach(l => l.fit());
</script>
</body>
</html>
